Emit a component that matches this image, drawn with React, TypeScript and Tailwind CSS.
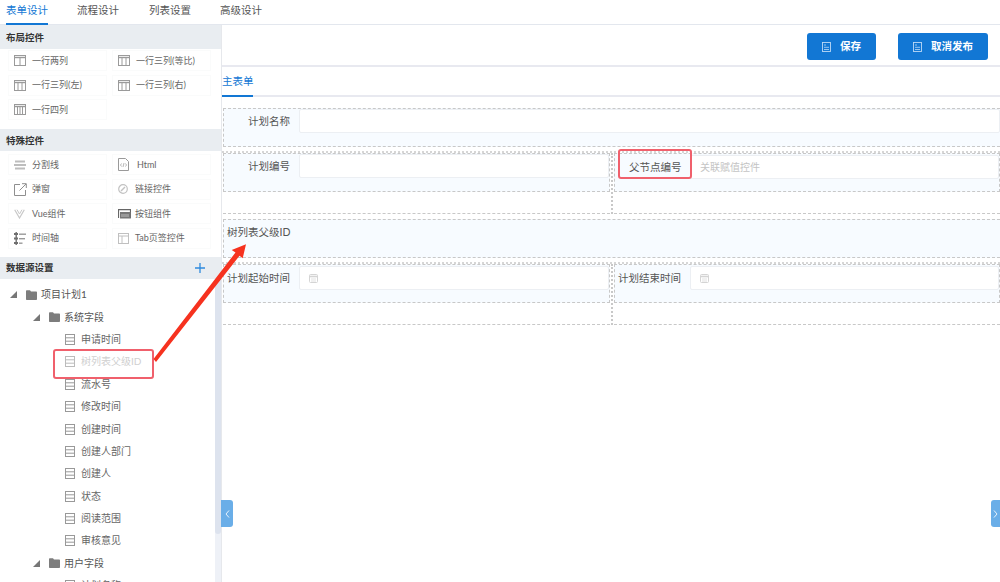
import React from "react";

function ColIcon({ n }: { n: number }) {
  const xs = n === 2 ? [6] : n === 3 ? [4, 8] : [3.5, 6, 8.5];
  return (
    <svg width="12" height="11" viewBox="0 0 12 11" fill="none" stroke="#9a9a9a" strokeWidth="1">
      <rect x="0.5" y="0.5" width="11" height="10" />
      <path d="M0.5 2.5H11.5" strokeWidth="1.4" />
      {xs.map((x) => (
        <path key={x} d={`M${x} 2.5V10.5`} />
      ))}
    </svg>
  );
}

const SpecialIcons: Record<string, React.ReactNode> = {
  line: (
    <svg width="12" height="10" viewBox="0 0 12 10" fill="#bdbdbd">
      <rect x="1" y="0.5" width="10" height="2" />
      <rect x="0" y="4" width="12" height="2" />
      <rect x="1" y="7.5" width="10" height="2" />
    </svg>
  ),
  html: (
    <svg width="11" height="13" viewBox="0 0 11 13" fill="none" stroke="#9a9a9a">
      <path d="M0.5 0.5H7.5L10.5 3.5V12.5H0.5Z" />
      <path d="M3.5 5.5L2.5 7L3.5 8.5M7.5 5.5L8.5 7L7.5 8.5M6 5L5 9" strokeWidth="0.7" />
    </svg>
  ),
  popup: (
    <svg width="13" height="13" viewBox="0 0 13 13" fill="none" stroke="#8f8f8f">
      <path d="M6 1.5H0.5V12.5H11.5V7" />
      <path d="M5.5 7.5L12 1M8 0.7H12.3V5" />
    </svg>
  ),
  link: (
    <svg width="10" height="10" viewBox="0 0 10 10" fill="none" stroke="#c2c2c2">
      <circle cx="5" cy="5" r="4.3" strokeWidth="1.2" />
      <path d="M3 7L7 3" strokeWidth="1.4" />
    </svg>
  ),
  vue: (
    <svg width="11" height="10" viewBox="0 0 11 10" fill="none" stroke="#c8c8c8">
      <path d="M0.7 0.7L5.5 9L10.3 0.7" strokeWidth="1.2" />
      <path d="M3 0.7L5.5 5L8 0.7" strokeWidth="1" />
    </svg>
  ),
  button: (
    <svg width="13" height="10" viewBox="0 0 13 10" fill="none">
      <path d="M0.5 9V0.7H12.5V9.3" stroke="#666" strokeWidth="1.2" />
      <rect x="2" y="3" width="10.5" height="6.5" fill="#777" />
      <path d="M4 5V8M6 5V8M8 5V8M10 5V8" stroke="#ddd" strokeWidth="0.7" />
    </svg>
  ),
  time: (
    <svg width="12" height="13" viewBox="0 0 12 13" fill="#6f6f6f">
      <rect x="1.5" y="0" width="1.4" height="13" />
      <rect x="0" y="1" width="4" height="2" />
      <rect x="0" y="5.5" width="4" height="2" />
      <rect x="0" y="10" width="4" height="2" />
      <rect x="5" y="1.5" width="7" height="1.4" fill="#999" />
      <rect x="5" y="6" width="6" height="1.4" fill="#999" />
      <rect x="5" y="10.5" width="3.5" height="1.4" fill="#999" />
    </svg>
  ),
  tab: (
    <svg width="11" height="11" viewBox="0 0 11 11" fill="none" stroke="#c0c0c0">
      <rect x="0.5" y="0.5" width="10" height="10" />
      <path d="M0.5 3H10.5M4 3V10.5" />
    </svg>
  ),
};

function Widget({ icon, label, iconBox = 18 }: { icon: React.ReactNode; label: string; iconBox?: number }) {
  return (
    <div className="flex h-[21px] w-[99px] items-center border border-[#fafbfb] pl-[5px] text-[9px] text-[#666]">
      <span className="flex justify-start" style={{ width: iconBox }}>
        {icon}
      </span>
      <span className="whitespace-nowrap">{label}</span>
    </div>
  );
}

function SectionHead({ children, extra }: { children: React.ReactNode; extra?: React.ReactNode }) {
  return (
    <div className="flex h-[22px] items-center justify-between bg-[#e9edf1] pl-[6px] pr-[16px] text-[9.5px] font-bold text-[#333]">
      <span className="pt-[2px]">{children}</span>
      {extra}
    </div>
  );
}

function Triangle() {
  return (
    <svg width="7" height="7" viewBox="0 0 7 7" fill="#777">
      <path d="M7 0V7H0Z" />
    </svg>
  );
}

function Folder() {
  return (
    <svg width="11" height="10" viewBox="0 0 11 10" fill="#7d7d7d">
      <path d="M0 1.2C0 0.6 0.4 0.2 1 0.2H4L5 1.4H10C10.6 1.4 11 1.8 11 2.4V9C11 9.6 10.6 10 10 10H1C0.4 10 0 9.6 0 9Z" />
    </svg>
  );
}

function FieldIcon({ faded = false }: { faded?: boolean }) {
  return (
    <svg width="10" height="11" viewBox="0 0 10 11" fill="none" stroke={faded ? "#bbb" : "#999"}>
      <rect x="0.5" y="0.5" width="9" height="10" />
      <path d="M0.5 3.8H9.5M0.5 7.2H9.5" />
    </svg>
  );
}

function TreeFolder({ label, indent }: { label: string; indent: number }) {
  return (
    <div className="flex h-[22.4px] items-center text-[10px] text-[#555]" style={{ paddingLeft: indent }}>
      <Triangle />
      <span className="ml-[9px] mr-[4px] flex">
        <Folder />
      </span>
      <span className="whitespace-nowrap">{label}</span>
    </div>
  );
}

function TreeField({ label, faded = false }: { label: string; faded?: boolean }) {
  return (
    <div className={`flex h-[22.4px] items-center pl-[65px] text-[10px] ${faded ? "text-[#d0d0d0]" : "text-[#666]"}`}>
      <FieldIcon faded={faded} />
      <span className="ml-[6px] whitespace-nowrap">{label}</span>
    </div>
  );
}

function CalIcon() {
  return (
    <svg width="9" height="9" viewBox="0 0 9 9" fill="none" stroke="#d4d4d4">
      <rect x="0.5" y="0.5" width="8" height="8" rx="1" />
      <path d="M0.5 2.5H8.5" strokeWidth="1.6" />
      <path d="M2 5H7M2 7H7" strokeWidth="0.7" />
    </svg>
  );
}

function DocIcon() {
  return (
    <svg width="9" height="10" viewBox="0 0 9 10" fill="none" stroke="#bcd9f5" strokeWidth="0.9">
      <rect x="0.5" y="0.5" width="8" height="9" />
      <path d="M2 3H4M2 5.3H7M2 7.5H7" strokeWidth="0.8" />
    </svg>
  );
}

function Btn({ label, w }: { label: string; w: string }) {
  return (
    <button className={`flex h-[27px] ${w} items-center justify-center gap-[9px] rounded-[3px] bg-[#1277d4] text-[10.5px] font-semibold text-white`}>
      <DocIcon />
      <span className="pt-[1px]">{label}</span>
    </button>
  );
}

function Field({ label, pad = "pr-[9px] text-right", children }: { label: string; pad?: string; children?: React.ReactNode }) {
  return (
    <div className="flex items-start">
      <div className={`w-[75px] ${pad} h-[23px] shrink-0 whitespace-nowrap text-[10.5px] leading-[24px] text-[#555]`}>{label}</div>
      <div className="flex h-[24px] min-w-0 flex-1 items-center rounded-[2px] border border-[#eceff3] bg-white pl-[9px] text-[10px] text-[#c4c4c4]">{children}</div>
    </div>
  );
}

function HalfCell({ label, pad, top = "pt-0", children }: { label: string; pad?: string; top?: string; children?: React.ReactNode }) {
  return (
    <div className="h-[61px] min-w-0 flex-1 border-b border-dashed border-[#c8c8c8]">
      <div className={`h-[39px] border border-dashed border-[#c8c8c8] bg-[#f7fbff] ${top}`}>
        <Field label={label} pad={pad}>{children}</Field>
      </div>
    </div>
  );
}

function TwoCols({ left, right, mt }: { left: React.ReactNode; right: React.ReactNode; mt: string }) {
  return (
    <div className={`${mt} flex border-t-2 border-dotted border-[#d6d6d6] pl-[1px]`}>
      <div className="min-w-0 flex-1 pr-[1px]">{left}</div>
      <div className="w-[2px] shrink-0 border-l-2 border-dotted border-[#c8c8c8]" />
      <div className="w-[387px] shrink-0 pl-[1px]">{right}</div>
    </div>
  );
}

export default function App() {
  const fields = ["修改时间", "创建时间", "创建人部门", "创建人", "状态", "阅读范围", "审核意见"];
  return (
    <div
      className="relative h-[582px] w-[1000px] overflow-hidden bg-white"
      style={{ fontFamily: '"Lato", "Noto Sans CJK SC", sans-serif' }}
    >
      <div className="flex h-[25px] border-b border-[#e3e7ee] pl-[6px] text-[10.5px] text-[#555]">
        <div className="h-[25px] w-[42px] border-b-2 border-[#1277d4] pt-[3px] text-[#1277d4]">表单设计</div>
        <div className="ml-[29px] pt-[3px]">流程设计</div>
        <div className="ml-[30px] pt-[3px]">列表设置</div>
        <div className="ml-[29px] pt-[3px]">高级设计</div>
      </div>

      <div className="flex h-[557px]">
        <aside className="relative h-full w-[222px] shrink-0 overflow-hidden border-r border-[#e6e8ec]">
          <div className="flex h-[24px] items-center bg-[#e9edf1] pl-[6px] pt-[2px] text-[9.5px] font-bold text-[#333]">布局控件</div>
          <div className="grid grid-cols-[99px_99px] gap-x-[5px] gap-y-[3.5px] pl-[8px] pt-[1px]">
            <Widget icon={<ColIcon n={2} />} label="一行两列" />
            <Widget icon={<ColIcon n={3} />} label="一行三列(等比)" />
            <Widget icon={<ColIcon n={3} />} label="一行三列(左)" />
            <Widget icon={<ColIcon n={3} />} label="一行三列(右)" />
            <Widget icon={<ColIcon n={4} />} label="一行四列" />
          </div>
          <div className="h-[9px]" />
          <SectionHead>特殊控件</SectionHead>
          <div className="grid grid-cols-[99px_99px] gap-x-[5px] gap-y-[3.5px] pl-[8px] pt-[3px]">
            <Widget icon={SpecialIcons.line} label="分割线" />
            <Widget icon={SpecialIcons.html} label="Html" iconBox={19} />
            <Widget icon={SpecialIcons.popup} label="弹窗" />
            <Widget icon={SpecialIcons.link} label="链接控件" iconBox={17} />
            <Widget icon={SpecialIcons.vue} label="Vue组件" />
            <Widget icon={SpecialIcons.button} label="按钮组件" iconBox={17} />
            <Widget icon={SpecialIcons.time} label="时间轴" />
            <Widget icon={SpecialIcons.tab} label="Tab页签控件" iconBox={17} />
          </div>
          <div className="h-[8px]" />
          <SectionHead
            extra={
              <svg width="10" height="10" viewBox="0 0 10 10" stroke="#2f8ade" strokeWidth="1.3">
                <path d="M5 0V10M0 5H10" />
              </svg>
            }
          >
            数据源设置
          </SectionHead>
          <div className="pt-[5px]">
            <TreeFolder label="项目计划1" indent={10} />
            <TreeFolder label="系统字段" indent={33} />
            <TreeField label="申请时间" />
            <TreeField label="树列表父级ID" faded />
            <TreeField label="流水号" />
            {fields.map((f) => (
              <TreeField key={f} label={f} />
            ))}
            <TreeFolder label="用户字段" indent={33} />
            <TreeField label="计划名称" />
          </div>
          <div className="absolute bottom-0 right-0 top-[254px] w-[6px] bg-[#eef1f7]">
            <div className="h-[255px] w-full rounded-b-[3px] bg-[#dde3ee]" />
          </div>
        </aside>

        <main className="min-w-0 flex-1">
          <div className="flex h-[42px] items-start justify-end gap-[22px] border-b-2 border-[#e8e9f0] pr-[12px] pt-[8px]">
            <Btn label="保存" w="w-[69px]" />
            <Btn label="取消发布" w="w-[90px]" />
          </div>
          <div className="h-[30px] border-b-2 border-[#e8e9f0]">
            <div className="h-[30px] w-[31px] border-b-2 border-[#1277d4] pt-[7px] text-[10.5px] whitespace-nowrap text-[#1277d4]">主表单</div>
          </div>

          <div className="pt-[11px]">
            <div className="ml-[1px] h-[39px] border border-r-0 border-dashed border-[#c8c8c8] bg-[#f7fbff]">
              <Field label="计划名称" />
            </div>
            <TwoCols
              mt="mt-[4px]"
              left={<HalfCell label="计划编号" />}
              right={<HalfCell label="父节点编号" pad="pl-[14px]" top="pt-[1px]"><span>关联赋值控件</span></HalfCell>}
            />
            <div className="ml-[1px] mt-[5px] h-[39px] border border-r-0 border-dashed border-[#c8c8c8] bg-[#f7fbff] pl-[3px] pt-[5px] text-[10.5px] text-[#555]">
              树列表父级ID
            </div>
            <TwoCols
              mt="mt-[4px]"
              left={<HalfCell label="计划起始时间" pad="pl-[3px]" top="pt-[1px]"><CalIcon /></HalfCell>}
              right={<HalfCell label="计划结束时间" pad="pl-[3px]" top="pt-[1px]"><CalIcon /></HalfCell>}
            />
          </div>
        </main>
      </div>

      {/* annotations */}
      <div className="absolute left-[53px] top-[349px] h-[30px] w-[101px] rounded-[3px] border-2 border-[#f0606c]" />
      <div className="absolute left-[618px] top-[149px] h-[30px] w-[74px] rounded-[3px] border-2 border-[#f0606c]" />
      <svg className="absolute left-[150px] top-[235px]" width="100" height="130" viewBox="0 0 100 130" fill="#f6321f">
        <path d="M3.5 124L85.5 17.5L81.7 15L96 9.3L92.7 23.3L89.5 20.7L6 127Z" />
      </svg>

      {/* collapse handles */}
      <div className="absolute left-[221px] top-[500px] flex h-[27px] w-[12px] items-center justify-center rounded-r-[3px] bg-[#6aaee8]">
        <svg width="5" height="8" viewBox="0 0 5 8" fill="none" stroke="#e6f2fc"><path d="M4 0.5L1 4L4 7.5" /></svg>
      </div>
      <div className="absolute left-[991px] top-[500px] flex h-[27px] w-[9px] items-center justify-center rounded-l-[3px] bg-[#6aaee8]">
        <svg width="5" height="8" viewBox="0 0 5 8" fill="none" stroke="#e6f2fc"><path d="M1 0.5L4 4L1 7.5" /></svg>
      </div>
    </div>
  );
}
